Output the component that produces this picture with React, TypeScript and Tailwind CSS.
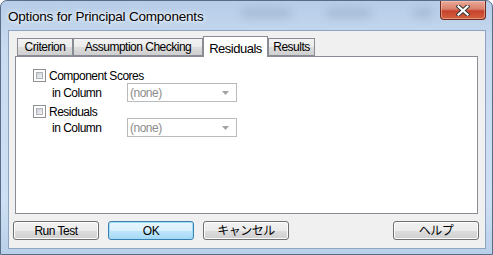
import type { ReactNode } from 'react'

const FONT = { fontFamily: '"Liberation Sans", "Noto Sans CJK JP", Arial, sans-serif' }

function Checkbox() {
  return (
    <div className="h-[13px] w-[13px] shrink-0 border border-[#8e8f8f] bg-white p-[2px]">
      <div className="h-full w-full border border-[#aeb3b9] bg-[linear-gradient(135deg,#cbcfd5,#f3f4f6)]" />
    </div>
  )
}

function Combo() {
  return (
    <div className="flex h-[19px] w-[110px] items-center justify-between border border-[#b8bcc0] bg-white pl-[2px] pr-[7px] text-[#8d8d8d]">
      <span>(none)</span>
      <svg width="7" height="4" viewBox="0 0 7 4">
        <path d="M0 0h7L3.5 4z" fill="#a2a2a2" />
      </svg>
    </div>
  )
}

function Tab({ label, width, active }: { label: string; width: string; active?: boolean }) {
  if (active) {
    return (
      <div
        className={`${width} relative z-10 -mb-[1px] flex h-[21px] items-start justify-center border border-b-0 border-[#898c95] bg-white pt-[2px] text-[13px]`}
      >
        {label}
      </div>
    )
  }
  return (
    <div
      className={`${width} flex h-[18px] items-center justify-center border border-[#898c95] bg-[linear-gradient(#f3f3f3,#ebebeb_50%,#dddddd_51%,#cfcfcf)]`}
    >
      {label}
    </div>
  )
}

function Btn({ children, primary, className = '' }: { children: ReactNode; primary?: boolean; className?: string }) {
  const look = primary
    ? 'border-[#3c7fb1] bg-[linear-gradient(#eaf6fd,#d9f0fc_50%,#bee6fd_51%,#a7d9f5)] shadow-[inset_0_0_0_1px_#9fdcf7]'
    : 'border-[#707070] bg-[linear-gradient(#f2f2f2,#ebebeb_50%,#dddddd_51%,#cfcfcf)] shadow-[inset_0_0_0_1px_#fcfcfc]'
  return (
    <div className={`flex h-[19px] w-[86px] items-center justify-center rounded-[3px] border ${look} ${className}`}>
      {children}
    </div>
  )
}

export default function App() {
  return (
    <div
      className="relative flex h-[255px] w-[493px] flex-col overflow-hidden rounded-t-[7px] border border-[#5a6d88] bg-[linear-gradient(#b7cde8,#c9dbef_20%,#cddff2_80%,#b9d0ea)] text-[12px] tracking-[-0.5px] text-black"
      style={FONT}
    >
      {/* blurred glass smudges */}
      <div className="absolute left-[240px] top-[8px] h-[8px] w-[50px] rounded-full bg-[#8196b3] opacity-40 blur-[4px]" />
      <div className="absolute left-[325px] top-[8px] h-[8px] w-[45px] rounded-full bg-[#8196b3] opacity-40 blur-[4px]" />
      <div className="absolute left-[412px] top-[8px] h-[8px] w-[20px] rounded-full bg-[#8196b3] opacity-40 blur-[4px]" />

      <div className="relative flex h-[29px] shrink-0 items-start">
        <div className="pl-[7px] pt-[6px] text-[13.5px] tracking-[-0.2px] [text-shadow:0_0_6px_#ffffff,0_0_3px_#ffffff]">
          Options for Principal Components
        </div>
        <div className="ml-auto mr-[6px] flex h-[19px] w-[46px] items-center justify-center rounded-b-[4px] border border-t-0 border-[#6e2a1f] bg-[linear-gradient(#eaa99a,#d9806a_45%,#c6432c_55%,#d4613f)] shadow-[inset_0_0_0_1px_rgba(255,210,200,0.45)]">
          <svg width="14" height="11" viewBox="0 0 14 11">
            <path d="M2.5 1.5l9 8M11.5 1.5l-9 8" stroke="#3a3a3a" strokeWidth="4.2" strokeLinecap="square" />
            <path d="M2.5 1.5l9 8M11.5 1.5l-9 8" stroke="#ffffff" strokeWidth="2.2" strokeLinecap="square" />
          </svg>
        </div>
      </div>

      <div className="ml-[7px] flex h-[219px] w-[478px] shrink-0 flex-col border border-[#8fa4c0] bg-[#f0f0f0]">
        <div className="ml-[8px] mt-[5px] flex h-[20px] items-end">
          <Tab label="Criterion" width="w-[56px]" />
          <Tab label="Assumption Checking" width="w-[130px]" />
          <Tab label="Residuals" width="w-[65px]" active />
          <Tab label="Results" width="w-[47px]" />
        </div>

        <div className="ml-[6px] h-[158px] w-[463px] border border-[#898c95] bg-white pl-[17px] pt-[12px]">
          <div className="flex h-[13px] items-center gap-[3px]">
            <Checkbox />
            <span>Component Scores</span>
          </div>
          <div className="mt-[1px] flex items-center">
            <span className="ml-[19px] w-[75px]">in Column</span>
            <Combo />
          </div>
          <div className="mt-[3px] flex h-[13px] items-center gap-[3px]">
            <Checkbox />
            <span>Residuals</span>
          </div>
          <div className="flex items-center">
            <span className="ml-[19px] w-[75px]">in Column</span>
            <Combo />
          </div>
        </div>

        <div className="mt-[7px] flex pl-[4px] pr-[6px]">
          <Btn>Run Test</Btn>
          <Btn primary className="ml-[9px]">OK</Btn>
          <Btn className="ml-[9px]">キャンセル</Btn>
          <Btn className="ml-auto">ヘルプ</Btn>
        </div>
      </div>
    </div>
  )
}
